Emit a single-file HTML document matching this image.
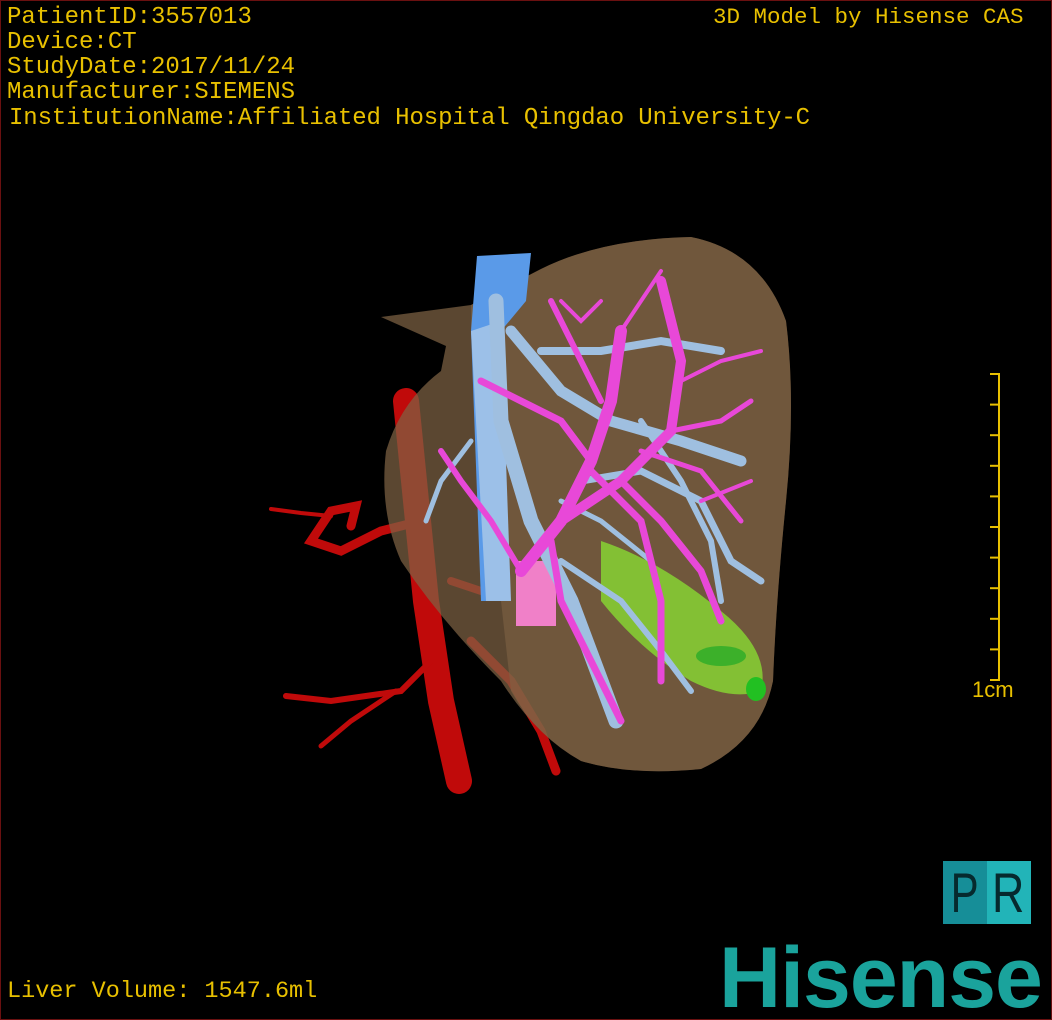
<!DOCTYPE html>
<html><head><meta charset="utf-8"><style>
html,body{margin:0;padding:0;background:#000;}
#w{position:relative;width:1052px;height:1020px;overflow:hidden;background:#000;box-sizing:border-box;border:1px solid #6a1010;}
.t{position:absolute;font-family:"Liberation Mono",monospace;color:#e8c000;font-size:24px;line-height:25px;white-space:pre;}
svg{position:absolute;left:0;top:0;}
</style></head><body><div id="w">
<svg width="1052" height="1020" viewBox="0 0 1052 1020">
<g stroke="#c00a0a" fill="none" stroke-linecap="round">
<path d="M405,400 L415,500 L425,600 L440,700 L458,780" stroke-width="26"/>
<path d="M430,660 L400,690 L330,700 L285,695" stroke-width="6"/>
<path d="M395,690 L350,720 L320,745" stroke-width="5"/>
<path d="M420,520 L380,530 L340,550 L310,540 L330,510 L355,505 L350,525" stroke-width="9"/>
<path d="M330,515 L300,512 L270,508" stroke-width="4"/>
<path d="M470,640 L510,680 L540,730 L555,770" stroke-width="9"/>
<path d="M450,580 L480,590" stroke-width="8"/>
</g>
<path d="M380,316 L470,304 L540,268 Q600,238 690,236 Q760,250 785,320 Q795,400 785,500 Q775,600 772,680 Q760,740 700,768 Q630,775 580,760 Q535,735 500,680 Q440,620 400,560 Q378,510 385,450 Q400,400 440,370 L445,345 Z" fill="#7e6244" opacity="0.72"/>
<path d="M470,304 L540,268 Q600,238 690,236 Q760,250 785,320 Q795,400 785,500 Q775,600 772,680 Q760,740 700,768 Q630,775 580,760 Q535,735 510,690 L470,330 Z" fill="#7e6244" opacity="0.6"/>
<path d="M600,540 Q660,560 720,610 Q770,650 760,690 Q730,700 690,680 Q640,650 600,600 Z" fill="#86d232" opacity="0.85"/>
<ellipse cx="720" cy="655" rx="25" ry="10" fill="#3cb02a"/>
<ellipse cx="755" cy="688" rx="10" ry="12" fill="#22c022"/>
<rect x="515" y="560" width="40" height="65" fill="#f080c8"/>
<path d="M476,255 L530,252 L525,300 L500,330 L490,600 L480,600 L470,330 Z" fill="#5a9ae8"/>
<path d="M470,330 L500,320 L510,600 L485,600 Z" fill="#9cc0e8"/>
<g stroke="#9fbfe0" fill="none" stroke-linecap="round">
<path d="M495,300 L500,420 L530,520 L570,600 L600,680 L615,720" stroke-width="15"/>
<path d="M510,330 L560,390 L610,420 L680,440 L740,460" stroke-width="11"/>
<path d="M540,350 L600,350 L660,340 L720,350" stroke-width="8"/>
<path d="M580,480 L640,470 L700,500 L730,560 L760,580" stroke-width="7"/>
<path d="M560,560 L620,600 L660,650 L690,690" stroke-width="6"/>
<path d="M470,440 L440,480 L425,520" stroke-width="5"/>
<path d="M560,500 L600,520 L650,560" stroke-width="5"/>
<path d="M640,420 L680,480 L710,540 L720,600" stroke-width="6"/>
</g>
<g stroke="#e848d8" fill="none" stroke-linecap="round">
<path d="M520,570 L560,520 L590,460 L610,400 L620,330" stroke-width="12"/>
<path d="M560,520 L620,480 L670,430 L680,360 L660,280" stroke-width="10"/>
<path d="M590,460 L560,420 L520,400 L480,380" stroke-width="7"/>
<path d="M600,400 L570,340 L550,300" stroke-width="6"/>
<path d="M620,480 L660,520 L700,570 L720,620" stroke-width="7"/>
<path d="M590,470 L640,520 L660,600 L660,680" stroke-width="7"/>
<path d="M550,540 L560,600 L590,660 L620,720" stroke-width="7"/>
<path d="M520,570 L490,520 L460,480 L440,450" stroke-width="6"/>
<path d="M670,430 L720,420 L750,400" stroke-width="5"/>
<path d="M680,380 L720,360 L760,350" stroke-width="4"/>
<path d="M640,450 L700,470 L740,520" stroke-width="5"/>
<path d="M620,330 L640,300 L660,270" stroke-width="4"/>
<path d="M560,300 L580,320 L600,300" stroke-width="4"/>
<path d="M700,500 L750,480" stroke-width="4"/>
</g>
</svg>
<div class="t" style="left:6px;top:4px;">PatientID:3557013</div>
<div class="t" style="left:6px;top:29px;">Device:CT</div>
<div class="t" style="left:6px;top:54px;">StudyDate:2017/11/24</div>
<div class="t" style="left:6px;top:79px;">Manufacturer:SIEMENS</div>
<div class="t" style="left:8px;top:105px;letter-spacing:-0.1px;">InstitutionName:Affiliated Hospital Qingdao University-C</div>
<div class="t" style="left:712px;top:4px;font-size:22.5px;">3D Model by Hisense CAS</div>
<div class="t" style="left:6px;top:978px;font-size:23.5px;">Liver Volume: 1547.6ml</div>
<div style="position:absolute;left:997px;top:372px;width:2px;height:307px;background:#e8c000;"></div>
<div style="position:absolute;left:989px;top:372px;width:10px;height:2px;background:#e8c000;box-shadow:0 30.6px 0 #e8c000,0 61.2px 0 #e8c000,0 91.8px 0 #e8c000,0 122.4px 0 #e8c000,0 153px 0 #e8c000,0 183.6px 0 #e8c000,0 214.2px 0 #e8c000,0 244.8px 0 #e8c000,0 275.4px 0 #e8c000,0 306px 0 #e8c000;"></div>
<div style="position:absolute;left:971px;top:676px;font-family:'Liberation Sans',sans-serif;font-size:22px;color:#e8c000;">1cm</div>
<div style="position:absolute;left:942px;top:860px;width:44px;height:63px;background:#168e98;"></div>
<div style="position:absolute;left:986px;top:860px;width:44px;height:63px;background:#22b4b8;"></div>
<div style="position:absolute;left:942px;top:858px;width:88px;height:66px;font-family:'Liberation Sans',sans-serif;font-size:56px;color:#062a2e;display:flex;justify-content:space-around;align-items:center;">
<span style="transform:scaleX(0.75)">P</span><span style="transform:scaleX(0.8)">R</span></div>
<div style="position:absolute;left:718px;top:932px;font-family:'Liberation Sans',sans-serif;font-weight:bold;font-size:86px;color:#1aa39c;letter-spacing:-1px;line-height:90px;">Hisense</div>
</div></body></html>
